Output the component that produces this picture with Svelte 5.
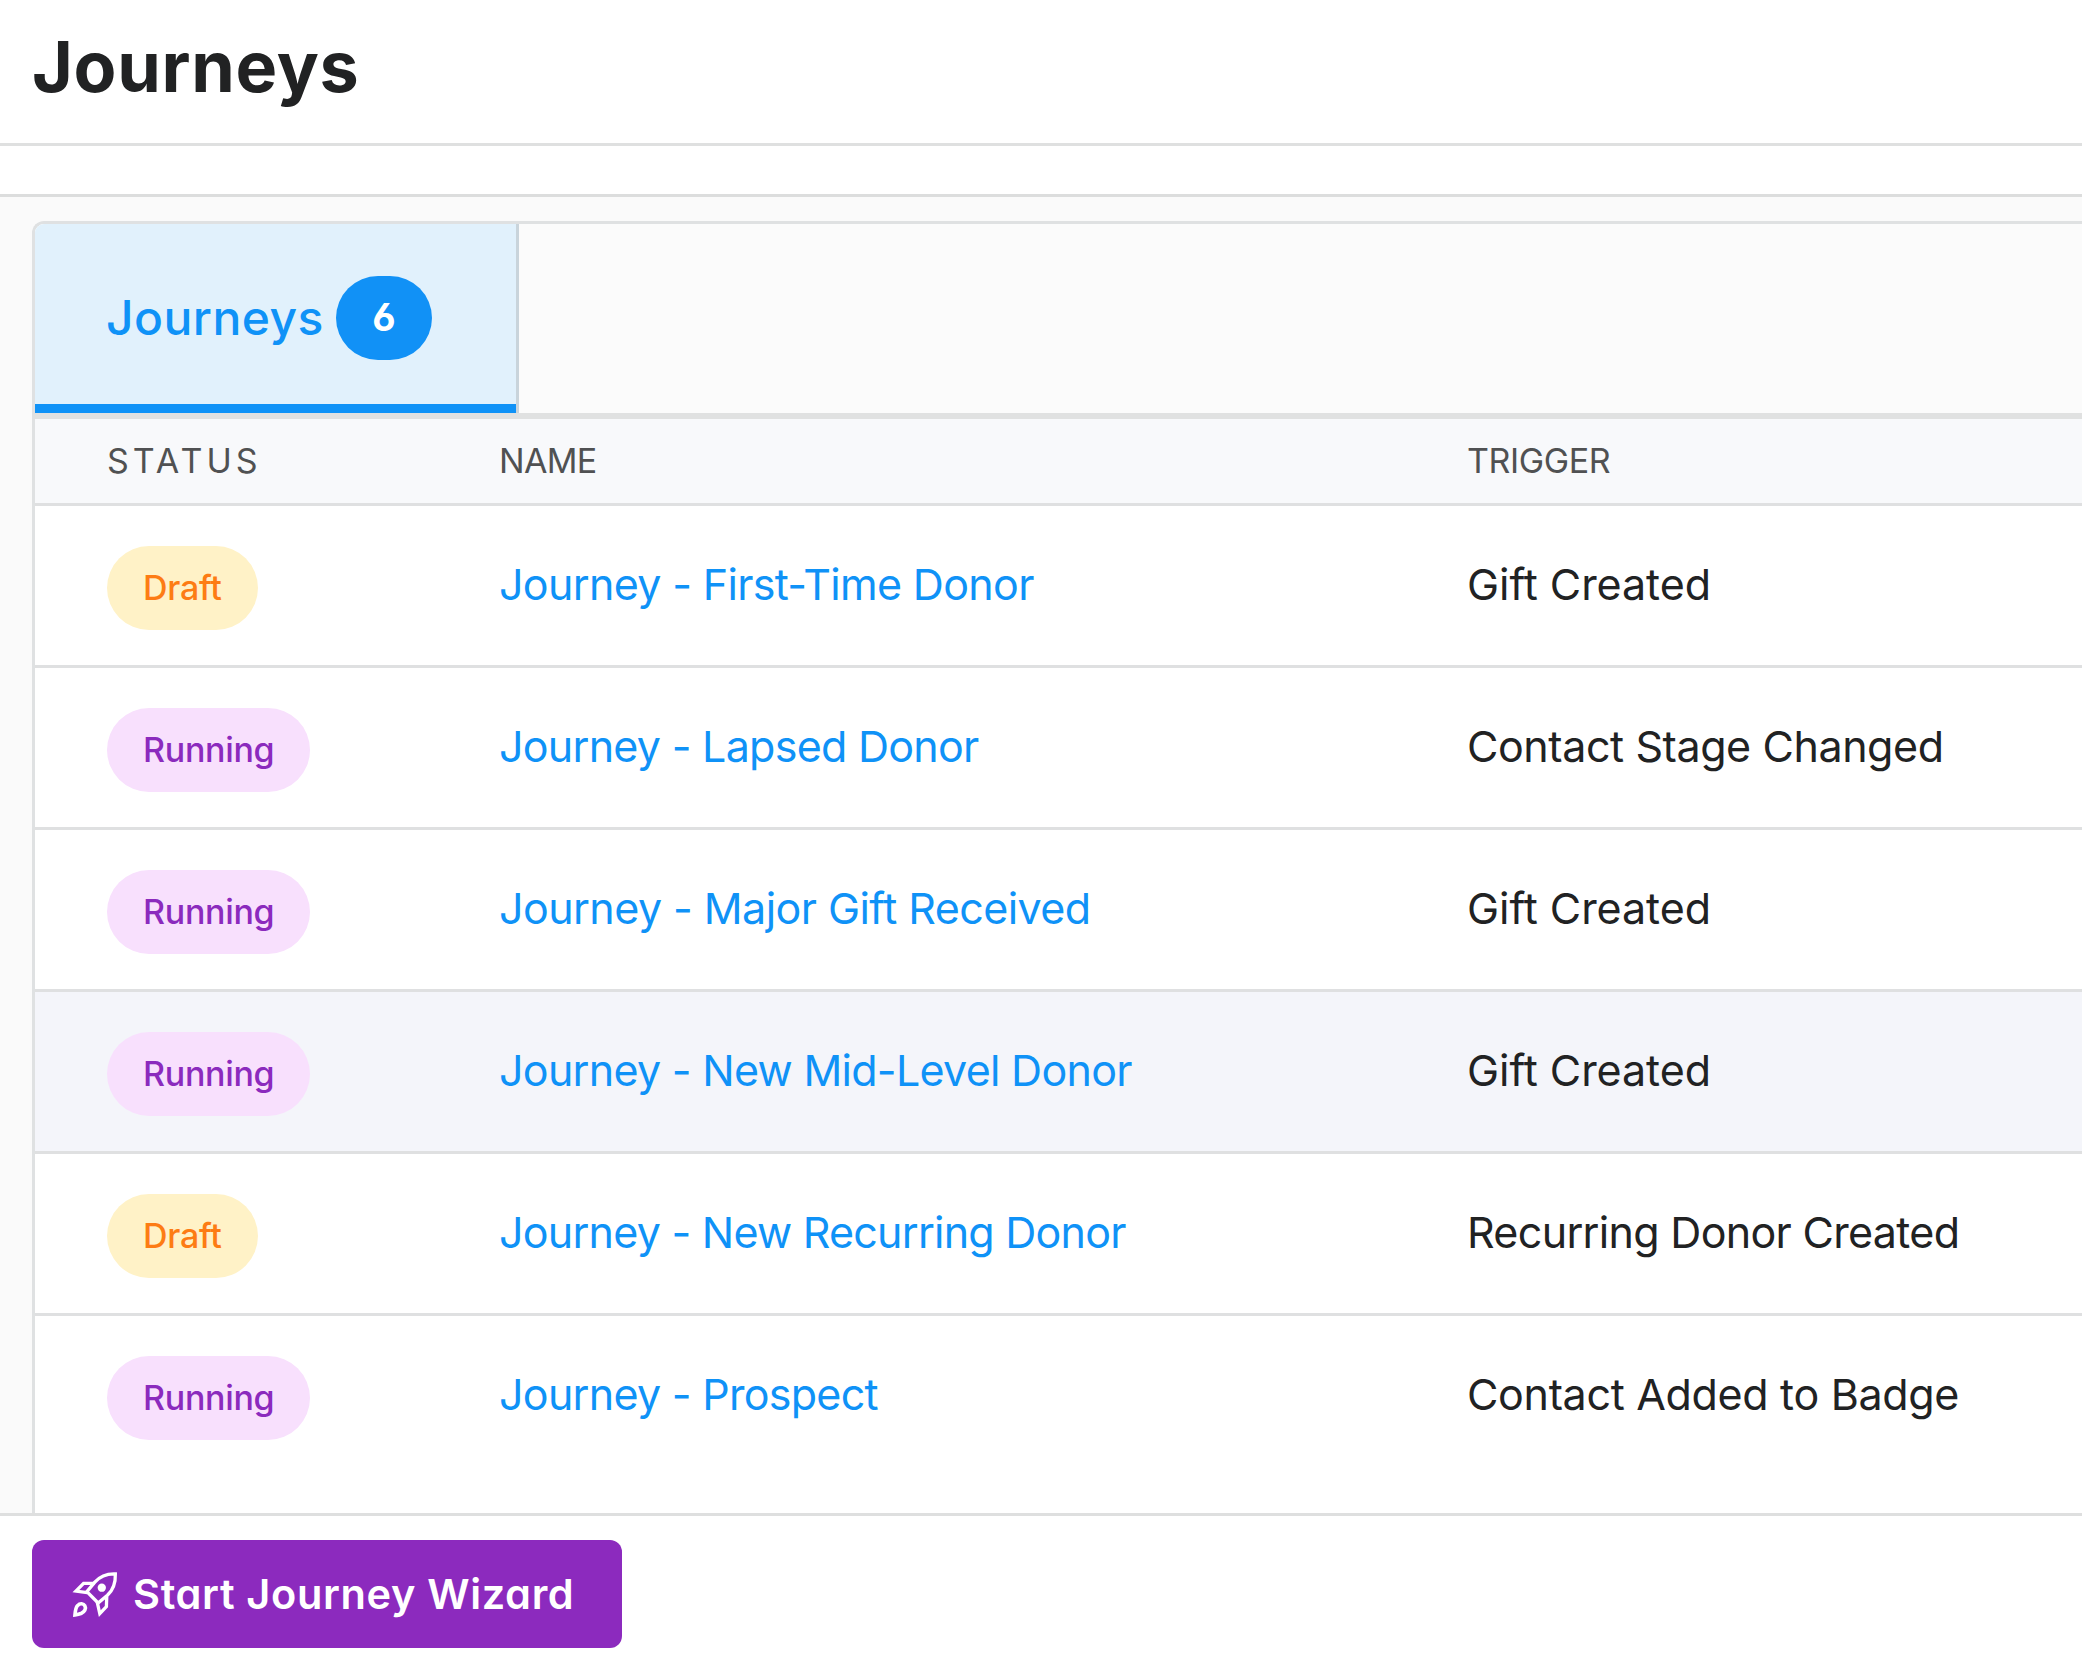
<script>
  // nameTracking / tracking: letter-spacing of the name and trigger text, in pixels
  const journeys = [
    { status: 'Draft', name: 'Journey - First-Time Donor', nameTracking: -0.67, trigger: 'Gift Created', tracking: -0.06 },
    { status: 'Running', name: 'Journey - Lapsed Donor', nameTracking: -0.73, trigger: 'Contact Stage Changed', tracking: -0.42 },
    { status: 'Running', name: 'Journey - Major Gift Received', nameTracking: -0.56, trigger: 'Gift Created', tracking: -0.06 },
    { status: 'Running', name: 'Journey - New Mid-Level Donor', nameTracking: -0.71, trigger: 'Gift Created', tracking: -0.06, active: true },
    { status: 'Draft', name: 'Journey - New Recurring Donor', nameTracking: -0.76, trigger: 'Recurring Donor Created', tracking: -0.68 },
    { status: 'Running', name: 'Journey - Prospect', nameTracking: -0.72, trigger: 'Contact Added to Badge', tracking: -0.32 }
  ];
</script>

<div class="page">
  <header class="title-bar"><h1>Journeys</h1></header>
  <div class="spacer"></div>

  <main>
    <section class="card">
      <nav class="tabs">
        <button class="tab">
          <span class="tab-label">Journeys</span>
          <span class="count">{journeys.length}</span>
        </button>
      </nav>
      <div class="row head">
        <span class="h-status">STATUS</span>
        <span>NAME</span>
        <span class="h-trigger">TRIGGER</span>
      </div>
      {#each journeys as j}
        <div class="row item" class:active={j.active}>
          <div><span class="badge {j.status.toLowerCase()}">{j.status}</span></div>
          <a href="#journey" style:letter-spacing="{j.nameTracking}px">{j.name}</a>
          <span class="trigger" style:letter-spacing="{j.tracking}px">{j.trigger}</span>
        </div>
      {/each}
    </section>
  </main>

  <footer>
    <button class="wizard">
      <svg viewBox="66 61 139 141" fill="none" stroke="#fff" stroke-width="10" stroke-linejoin="miter" stroke-linecap="butt">
        <path d="M197 69C172 68 150 77 135 94L111 123L145 157L173 134C190 118 198 96 197 69Z" />
        <path d="M134 98L101 98L78 121L112 126" />
        <path d="M171 138L170 168L150 189L142 154" />
        <path d="M75 193C76 180 77 171 83 165C90 157 101 158 105 166C110 175 103 184 95 188C90 190 83 192 75 193Z" stroke-width="11" />
        <circle cx="156" cy="111" r="12.5" fill="#fff" stroke="none" />
      </svg>
      <span>Start Journey Wizard</span>
    </button>
  </footer>
</div>

<style>
  :global(body) { margin: 0; background: #fff; }
  .page {
    width: 2082px;
    height: 1664px;
    overflow: hidden;
    display: flex;
    flex-direction: column;
    font-family: Inter, "Liberation Sans", sans-serif;
    color: #212223;
    background: #fff;
  }
  .page * { box-sizing: border-box; }
  button { font: inherit; border: 0; margin: 0; padding: 0; }
  .title-bar {
    height: 146px;
    flex: none;
    padding: 24px 32px 0;
    border-bottom: 3px solid #dfe0e0;
  }
  h1 {
    margin: 0;
    font-size: 70px;
    line-height: 86px;
    font-weight: 700;
    letter-spacing: 0.7px;
  }
  .spacer { height: 51px; flex: none; border-bottom: 3px solid #dcdddd; }
  main {
    flex: 1;
    min-height: 0;
    padding: 24px 0 0 32px;
    background: #fafafa;
    overflow: hidden;
  }
  .card {
    height: 1320px;
    border: 3px solid #dfe1e2;
    border-right: 0;
    border-top-left-radius: 12px;
    background: #fff;
    overflow: hidden;
  }
  .tabs {
    display: flex;
    height: 195px;
    background: #fbfbfb;
    border-bottom: 6px solid #e0e1e1;
  }
  .tab {
    width: 484px;
    display: flex;
    align-items: center;
    gap: 14px;
    padding: 0 0 2px 71px;
    background: #e1f1fc;
    border-right: 3px solid #c9d4db;
    color: #0f92f7;
    box-shadow: inset 0 -9px #0f92f7;
  }
  .tab-label {
    width: 216px;
    font-size: 48px;
    font-weight: 540;
    line-height: 60px;
    letter-spacing: 0.45px;
    text-align: left;
    white-space: nowrap;
  }
  .count {
    width: 96px;
    height: 84px;
    border-radius: 42px;
    display: flex;
    align-items: center;
    justify-content: center;
    background: #1191f6;
    color: #fff;
    font-size: 38px;
    font-weight: 650;
    font-feature-settings: "ss01";
    padding-bottom: 1px;
  }
  .row {
    display: grid;
    grid-template-columns: 392px 968px 1fr;
    align-items: center;
    padding-left: 72px;
    border-bottom: 3px solid #dfe0e1;
    white-space: nowrap;
  }
  .head {
    height: 87px;
    padding-bottom: 2px;
    background: #f8f9fb;
    color: #505152;
    font-size: 34px;
    letter-spacing: -0.7px;
  }
  .h-status { letter-spacing: 4px; }
  .h-trigger { letter-spacing: -0.4px; }
  .item { height: 162px; font-size: 43px; }
  .item:last-child { border-bottom-color: transparent; }
  .item.active { background: #f4f5fa; }
  .item a, .trigger { line-height: 52px; padding-bottom: 3px; }
  .item a { color: #0f92f7; text-decoration: none; }
  .badge {
    display: inline-flex;
    align-items: center;
    height: 84px;
    margin-top: 4px;
    padding: 0 36px;
    border-radius: 42px;
    font-size: 34px;
    font-weight: 540;
    letter-spacing: -0.3px;
  }
  .draft { background: #fff2c7; color: #fd7c14; }
  .running { background: #f8e0fd; color: #8b2abd; }
  footer {
    height: 151px;
    flex: none;
    padding: 24px 32px 0;
    border-top: 3px solid #dedfdf;
    background: #fff;
  }
  .wizard {
    width: 590px;
    height: 108px;
    display: flex;
    align-items: center;
    gap: 15px;
    padding-left: 40px;
    border-radius: 12px;
    background: #8c2abe;
    color: #fff;
    font-size: 41.5px;
    font-weight: 600;
    letter-spacing: 0.65px;
    white-space: nowrap;
    font-feature-settings: "cv11";
  }
  .wizard svg { width: 46px; height: 47px; flex: none; }
</style>
